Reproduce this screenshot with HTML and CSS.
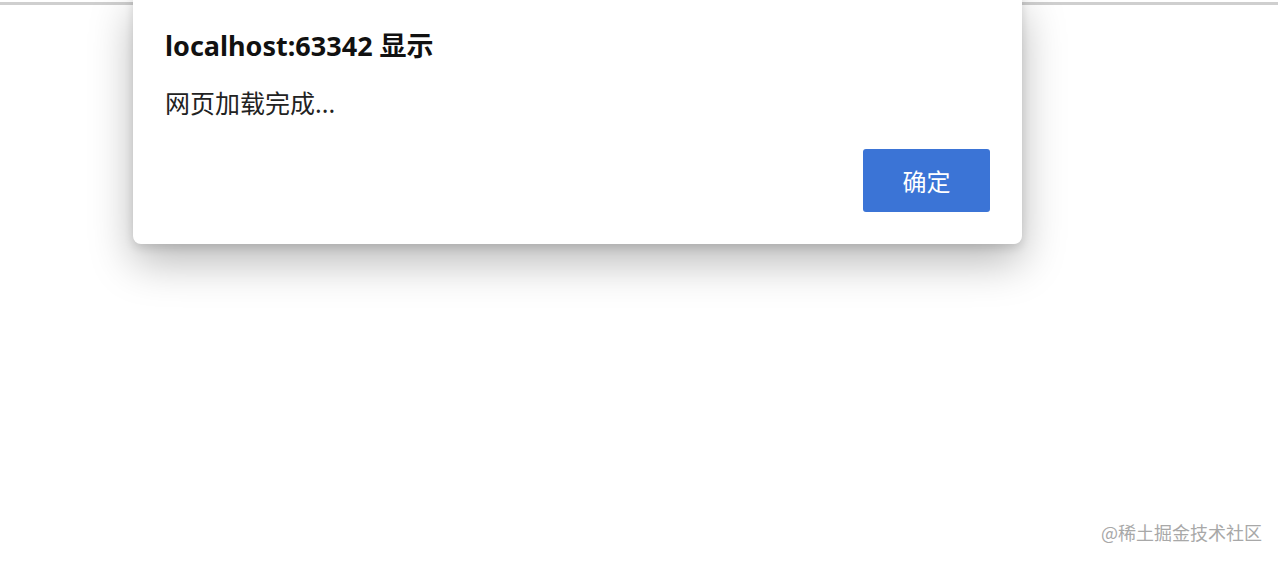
FILE: index.html
```html
<!DOCTYPE html>
<html lang="zh-CN">

<head>
    <meta charset="UTF-8">
    <meta name="viewport" content="width=device-width, initial-scale=1.0">
    <title>网页加载</title>
    <link rel="stylesheet" href="styles.css">
</head>

<body>
    <div class="topbar"></div>

    <div class="dialog">
        <h2 class="dialog-title">localhost:63342 显示</h2>
        <p class="dialog-msg">网页加载完成...</p>
        <div class="dialog-buttons">
            <button class="ok">确定</button>
        </div>
    </div>

    <div class="watermark">@稀土掘金技术社区</div>
</body>

</html>
```

FILE: styles.css
```css
body {
    margin: 0;
    padding: 0;
    width: 1278px;
    height: 561px;
    background-color: #fff;
    position: relative;
    overflow: hidden;
    font-family: "Noto Sans", "Noto Sans CJK SC", sans-serif;
}

.topbar {
    margin-top: 2px;
    height: 3px;
    background-color: #cfcfcf;
}

.dialog {
    position: absolute;
    left: 133px;
    top: -8px;
    width: 889px;
    height: 252px;
    box-sizing: border-box;
    padding: 36px 32px 0 32px;
    background-color: #fff;
    border-radius: 8px;
    box-shadow: 0 18px 44px rgba(0, 0, 0, 0.28), 0 4px 10px rgba(0, 0, 0, 0.12);
}

.dialog-title {
    margin: 0;
    font-size: 27px;
    font-weight: bold;
    line-height: 36px;
    color: #111;
}

.dialog-msg {
    margin: 22px 0 0 0;
    font-size: 25px;
    line-height: 34px;
    color: #222;
}

.dialog-buttons {
    display: flex;
    justify-content: flex-end;
    margin-top: 29px;
}

.ok {
    width: 127px;
    height: 63px;
    border: none;
    border-radius: 3px;
    background-color: #3b74d6;
    color: #fff;
    font-family: "Noto Sans CJK SC", sans-serif;
    font-size: 24px;
}

.watermark {
    position: absolute;
    right: 16px;
    bottom: 16px;
    font-family: "Noto Sans CJK SC", sans-serif;
    font-size: 18px;
    color: #a8a8a8;
}
```
